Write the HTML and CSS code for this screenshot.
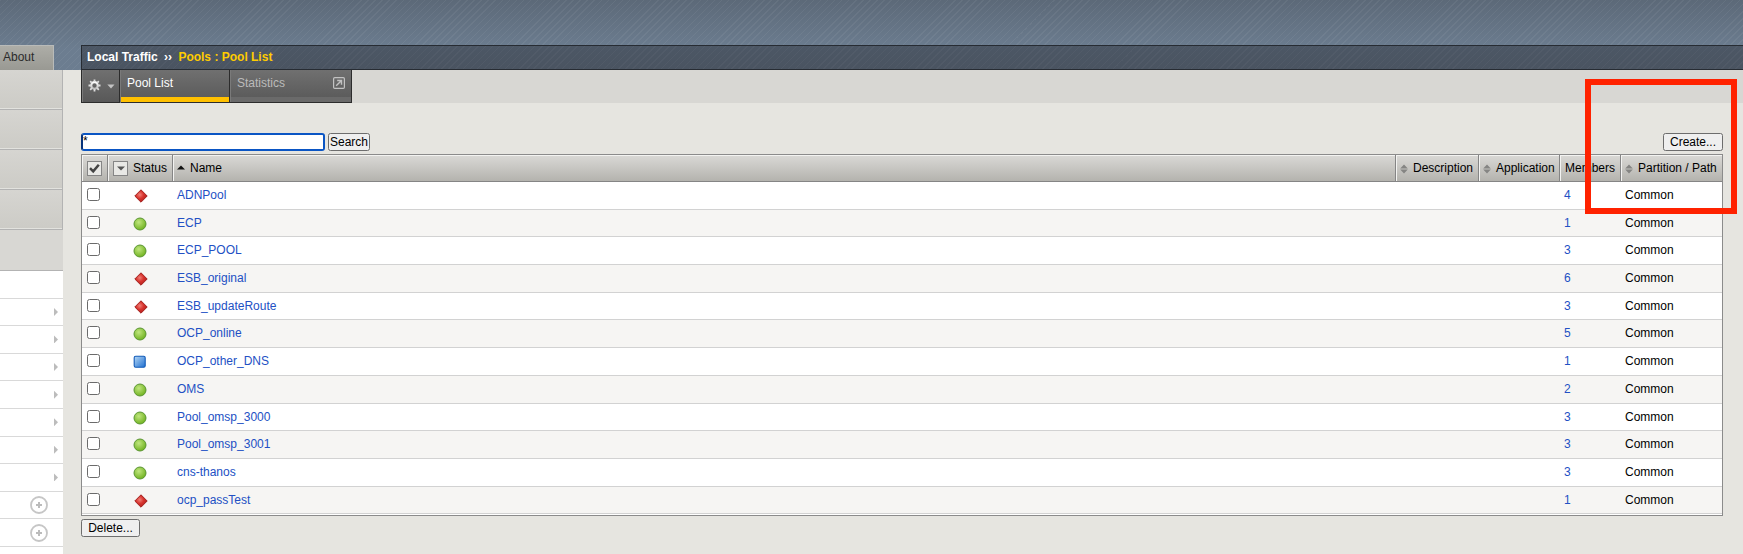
FILE: index.html
```html
<!DOCTYPE html>
<html lang="en">
<head>
<meta charset="utf-8">
<title>Pool List</title>
<link rel="stylesheet" href="styles.css">
</head>
<body>
<svg width="0" height="0" class="defs">
  <defs>
    <radialGradient id="gRed" cx=".4" cy=".4" r=".6"><stop offset="0" stop-color="#f08078"/><stop offset=".5" stop-color="#d8352f"/><stop offset="1" stop-color="#b3201d"/></radialGradient>
    <radialGradient id="gGreen" cx=".4" cy=".35" r=".65"><stop offset="0" stop-color="#c0e67e"/><stop offset="1" stop-color="#72b322"/></radialGradient>
    <linearGradient id="gBlue" x1="0" y1="0" x2="1" y2="1"><stop offset="0" stop-color="#b5d8f6"/><stop offset="1" stop-color="#1f6fd0"/></linearGradient>
    <linearGradient id="gGear" x1="0" y1="0" x2="0" y2="1"><stop offset="0" stop-color="#fff"/><stop offset="1" stop-color="#bbb"/></linearGradient>
    <symbol id="red" viewBox="0 0 14 14"><path d="M7 .8 13.2 7 7 13.2 .8 7z" fill="url(#gRed)" stroke="#a3221f" stroke-width="1"/></symbol>
    <symbol id="green" viewBox="0 0 14 14"><circle cx="7" cy="7" r="6" fill="url(#gGreen)" stroke="#5b9632" stroke-width="1"/></symbol>
    <symbol id="blue" viewBox="0 0 14 14"><rect x="1.2" y="1.2" width="11" height="11" rx="1.5" fill="url(#gBlue)" stroke="#125bb8" stroke-width="1.1"/></symbol>
    <symbol id="sort" viewBox="0 0 8 10"><path d="M4 .6 7.8 4.5H.2zM4 9.4 7.8 5.5H.2z" fill="#858583"/></symbol>
  </defs>
</svg>
<div class="page">
  <header class="top">
    <div class="about">About</div>
    <div class="crumbs">Local Traffic <span class="sep">››</span> <span class="current">Pools : Pool List</span></div>
  </header>
  <div class="body">
    <aside class="side">
      <div class="tile"></div><div class="tile"></div><div class="tile"></div><div class="tile"></div>
      <div class="open"></div>
      <div class="item"></div>
      <div class="item"><i class="arrow"></i></div>
      <div class="item"><i class="arrow"></i></div>
      <div class="item"><i class="arrow"></i></div>
      <div class="item"><i class="arrow"></i></div>
      <div class="item"><i class="arrow"></i></div>
      <div class="item"><i class="arrow"></i></div>
      <div class="item"><i class="arrow"></i></div>
      <div class="item add"><svg width="18" height="18" viewBox="0 0 18 18"><circle cx="9" cy="9" r="8" fill="none" stroke="#c6c6c6" stroke-width="1.8"/><path d="M9 6v6M6 9h6" stroke="#bbb" stroke-width="2"/></svg></div>
      <div class="item add"><svg width="18" height="18" viewBox="0 0 18 18"><circle cx="9" cy="9" r="8" fill="none" stroke="#c6c6c6" stroke-width="1.8"/><path d="M9 6v6M6 9h6" stroke="#bbb" stroke-width="2"/></svg></div>
      <div class="item"></div>
    </aside>
    <main class="main">
      <nav class="tabs">
        <div class="tab gear">
          <svg width="13" height="13" viewBox="0 0 13 13"><circle cx="6.5" cy="6.5" r="3.3" fill="none" stroke="url(#gGear)" stroke-width="2.2"/><path d="M6.5 .5v2.2M6.5 10.3v2.2M.5 6.5h2.2M10.3 6.5h2.2M2.2 2.2l1.6 1.6M9.2 9.2l1.6 1.6M2.2 10.8l1.6-1.6M9.2 3.8l1.6-1.6" stroke="#dedede" stroke-width="1.8"/></svg>
          <svg width="8" height="5" viewBox="0 0 8 5"><path d="M.3 .5h7.2L4 4.6z" fill="#c4c4c4"/></svg>
        </div>
        <div class="tab active">Pool List</div>
        <div class="tab stats">Statistics
          <svg width="12" height="12" viewBox="0 0 12 12" fill="none" stroke="#c2c2c2"><rect x=".6" y=".6" width="10.8" height="10.8" rx="1.2" stroke-width="1.2"/><path d="M3.2 8.8 8 4M4.2 3.5h4.3v4.3" stroke-width="1.4"/></svg>
        </div>
      </nav>
      <div class="toolbar">
        <div class="query">*</div>
        <button class="btn search">Search</button>
        <button class="btn create">Create...</button>
      </div>
      <div class="table">
        <div class="row head">
          <div class="h check"><span class="box"><svg width="11" height="11" viewBox="0 0 11 11"><path d="M1 5.2 4.2 8.4 9.8 1.8" fill="none" stroke="#444" stroke-width="2.5"/></svg></span></div>
          <div class="h status"><span class="box"><svg width="8" height="5" viewBox="0 0 8 5"><path d="M0 .4h8L4 4.6z" fill="#555"/></svg></span>Status</div>
          <div class="h name"><svg width="8" height="5" viewBox="0 0 8 5"><path d="M0 4.6h8L4 .4z" fill="#111"/></svg>Name</div>
          <div class="h sorted"><svg width="8" height="10"><use href="#sort"/></svg>Description</div>
          <div class="h sorted"><svg width="8" height="10"><use href="#sort"/></svg>Application</div>
          <div class="h">Members</div>
          <div class="h sorted"><svg width="8" height="10"><use href="#sort"/></svg>Partition / Path</div>
        </div>
        <div class="row"><i class="cb"></i><svg class="st d"><use href="#red"/></svg><a>ADNPool</a><a class="n">4</a><span>Common</span></div>
        <div class="row"><i class="cb"></i><svg class="st"><use href="#green"/></svg><a>ECP</a><a class="n">1</a><span>Common</span></div>
        <div class="row"><i class="cb"></i><svg class="st"><use href="#green"/></svg><a>ECP_POOL</a><a class="n">3</a><span>Common</span></div>
        <div class="row"><i class="cb"></i><svg class="st d"><use href="#red"/></svg><a>ESB_original</a><a class="n">6</a><span>Common</span></div>
        <div class="row"><i class="cb"></i><svg class="st d"><use href="#red"/></svg><a>ESB_updateRoute</a><a class="n">3</a><span>Common</span></div>
        <div class="row"><i class="cb"></i><svg class="st"><use href="#green"/></svg><a>OCP_online</a><a class="n">5</a><span>Common</span></div>
        <div class="row"><i class="cb"></i><svg class="st"><use href="#blue"/></svg><a>OCP_other_DNS</a><a class="n">1</a><span>Common</span></div>
        <div class="row"><i class="cb"></i><svg class="st"><use href="#green"/></svg><a>OMS</a><a class="n">2</a><span>Common</span></div>
        <div class="row"><i class="cb"></i><svg class="st"><use href="#green"/></svg><a>Pool_omsp_3000</a><a class="n">3</a><span>Common</span></div>
        <div class="row"><i class="cb"></i><svg class="st"><use href="#green"/></svg><a>Pool_omsp_3001</a><a class="n">3</a><span>Common</span></div>
        <div class="row"><i class="cb"></i><svg class="st"><use href="#green"/></svg><a>cns-thanos</a><a class="n">3</a><span>Common</span></div>
        <div class="row"><i class="cb"></i><svg class="st d"><use href="#red"/></svg><a>ocp_passTest</a><a class="n">1</a><span>Common</span></div>
      </div>
      <button class="btn delete">Delete...</button>
    </main>
  </div>
  <div class="highlight"></div>
</div>
</body>
</html>
```
FILE: styles.css
```css
* { box-sizing: border-box; }
html { overflow: hidden; }
body { margin: 0; font: 12px/14px "Liberation Sans", Arial, sans-serif; color: #000; }
.defs { position: absolute; }
.page { position: relative; width: 1743px; height: 554px; overflow: hidden; background: #e6e5e0; }
.top {
  height: 70px; display: flex; align-items: flex-end;
  background: repeating-linear-gradient(135deg, rgba(255,255,255,.05) 0 1px, transparent 1px 5px), linear-gradient(#5c6978, #6c7d90 70%);
}
.about { width: 54px; height: 25px; margin-right: 27px; padding: 4px 3px; color: #2b2b2b; background: linear-gradient(#adada7, #999993); border: solid #b9bbb9; border-width: 1px 1px 0 0; }
.crumbs {
  flex: 1; height: 25px; padding: 4px 5px; border: 1px solid #272c33; border-right: 0; color: #fff; font-weight: bold; white-space: pre;
  background: repeating-linear-gradient(135deg, rgba(255,255,255,.03) 0 1px, transparent 1px 5px), linear-gradient(#4c5765, #4a5461);
}
.sep { margin: 0 3px; }
.current { color: #fc0; }
.body { display: flex; height: 484px; }
.side { width: 63px; flex: none; }
.tile { height: 40px; background: linear-gradient(#d6d5d1, #cccbc6); border: solid #b3b3b3; border-width: 0 1px 1px 0; box-shadow: inset 0 -1px #e2e2de; }
.open { height: 41px; background: #d8d7d3; border-bottom: 1px solid #b3b3b3; }
.item { height: 27.6px; background: #fff; border-bottom: 1px solid #d9d9d9; display: flex; align-items: center; justify-content: flex-end; padding-right: 5px; }
.add { padding-right: 15px; }
.arrow { width: 4px; height: 8px; background: #bcbcbc; clip-path: polygon(0 0, 100% 50%, 0 100%); }
.main { flex: 1; padding-left: 18px; }
.tabs { height: 33px; display: flex; background: #d8d7d3; }
.tab { height: 33px; border: solid #2c2c2c; border-width: 0 1px 1px 0; background: linear-gradient(#707070, #585858); box-shadow: inset 1px 0 #7a7a7a; }
.gear { width: 39px; border-left-width: 1px; display: flex; align-items: center; padding: 0 0 1px 6px; gap: 6px; }
.gear svg + svg { margin-top: 2px; }
.active { width: 110px; padding: 6px 7px; color: #fff; border-bottom: 0; background: linear-gradient(#ffc000, #ffc000) 1px 27px / 100% 5px no-repeat, linear-gradient(#2c2c2c, #2c2c2c) 0 32px / 100% 1px no-repeat, linear-gradient(#707070, #585858); }
.stats { width: 122px; padding: 6px 6px 0 7px; color: #bbb; display: flex; justify-content: space-between; background: linear-gradient(#6a6a6a, #6a6a6a) 0 27px / 100% 5px no-repeat, linear-gradient(#707070, #585858); }
.stats svg { margin-top: 1px; }
.toolbar { height: 51px; padding: 30px 20px 0 0; display: flex; }
.query { width: 244px; height: 18px; border: 2px solid #0a55c4; border-radius: 3px; background: #fff; border-left-color: #06337c; line-height: 13px; font-size: 12px; }
.btn { height: 18px; padding: 0 0 1px; border: 1px solid #6d6d6d; border-radius: 2.5px; background: #efefef; font: 12px/14px "Liberation Sans", Arial, sans-serif; color: #000; }
.search { width: 42px; margin-left: 3px; }
.create { width: 60px; margin-left: auto; }
.delete { display: block; width: 59px; margin-top: 3px; }
.table { width: 1642px; height: 362px; border: 1px solid #8b8b8b; background: #fff; }
.row { display: grid; grid-template-columns: 26px 65px 1387px 61px 101px; height: 27.7px; border-bottom: 1px solid #d2d2d2; white-space: nowrap; }
.row:nth-child(odd) { background: #f6f5f3; }
.row a { color: #2250c4; padding: 6px 0 0 4px; }
.row span { padding: 6px 0 0 4px; }
.row .n { padding-left: 4px; }
.row.head { grid-template-columns: 26px 65px 1223px 83px 81px 61px 101px; height: 27px; border-bottom: 1px solid #858585; background: linear-gradient(#dad9d6, #b4b3ae); }
.h { display: flex; align-items: center; padding: 0 0 1px 5px; border-right: 1px solid #858585; box-shadow: inset 1px 1px #f3f3f1; }
.h:last-child { border-right: 0; }
.head .sorted { padding-left: 4px; }
.sorted svg { margin: 2px 5px 0 0; }
.head .name { padding-left: 4px; gap: 5px; }
.head .box { width: 15px; height: 15px; margin-top: 2px; padding: 0; border: 1px solid #858585; background: #e8e8e5; display: flex; align-items: center; justify-content: center; flex: none; }
.head .status .box { margin-right: 5px; }
.cb { width: 13px; height: 13px; margin: 6px 0 0 5px; border: 1px solid #6b6b6b; border-radius: 2.5px; background: #fff; }
.st { width: 14px; height: 14px; margin: 7px 0 0 24.5px; }
.st.d { margin-left: 25.5px; }
.highlight { position: absolute; left: 1585px; top: 79px; width: 152px; height: 135px; border: 6px solid #ff2200; }
```
